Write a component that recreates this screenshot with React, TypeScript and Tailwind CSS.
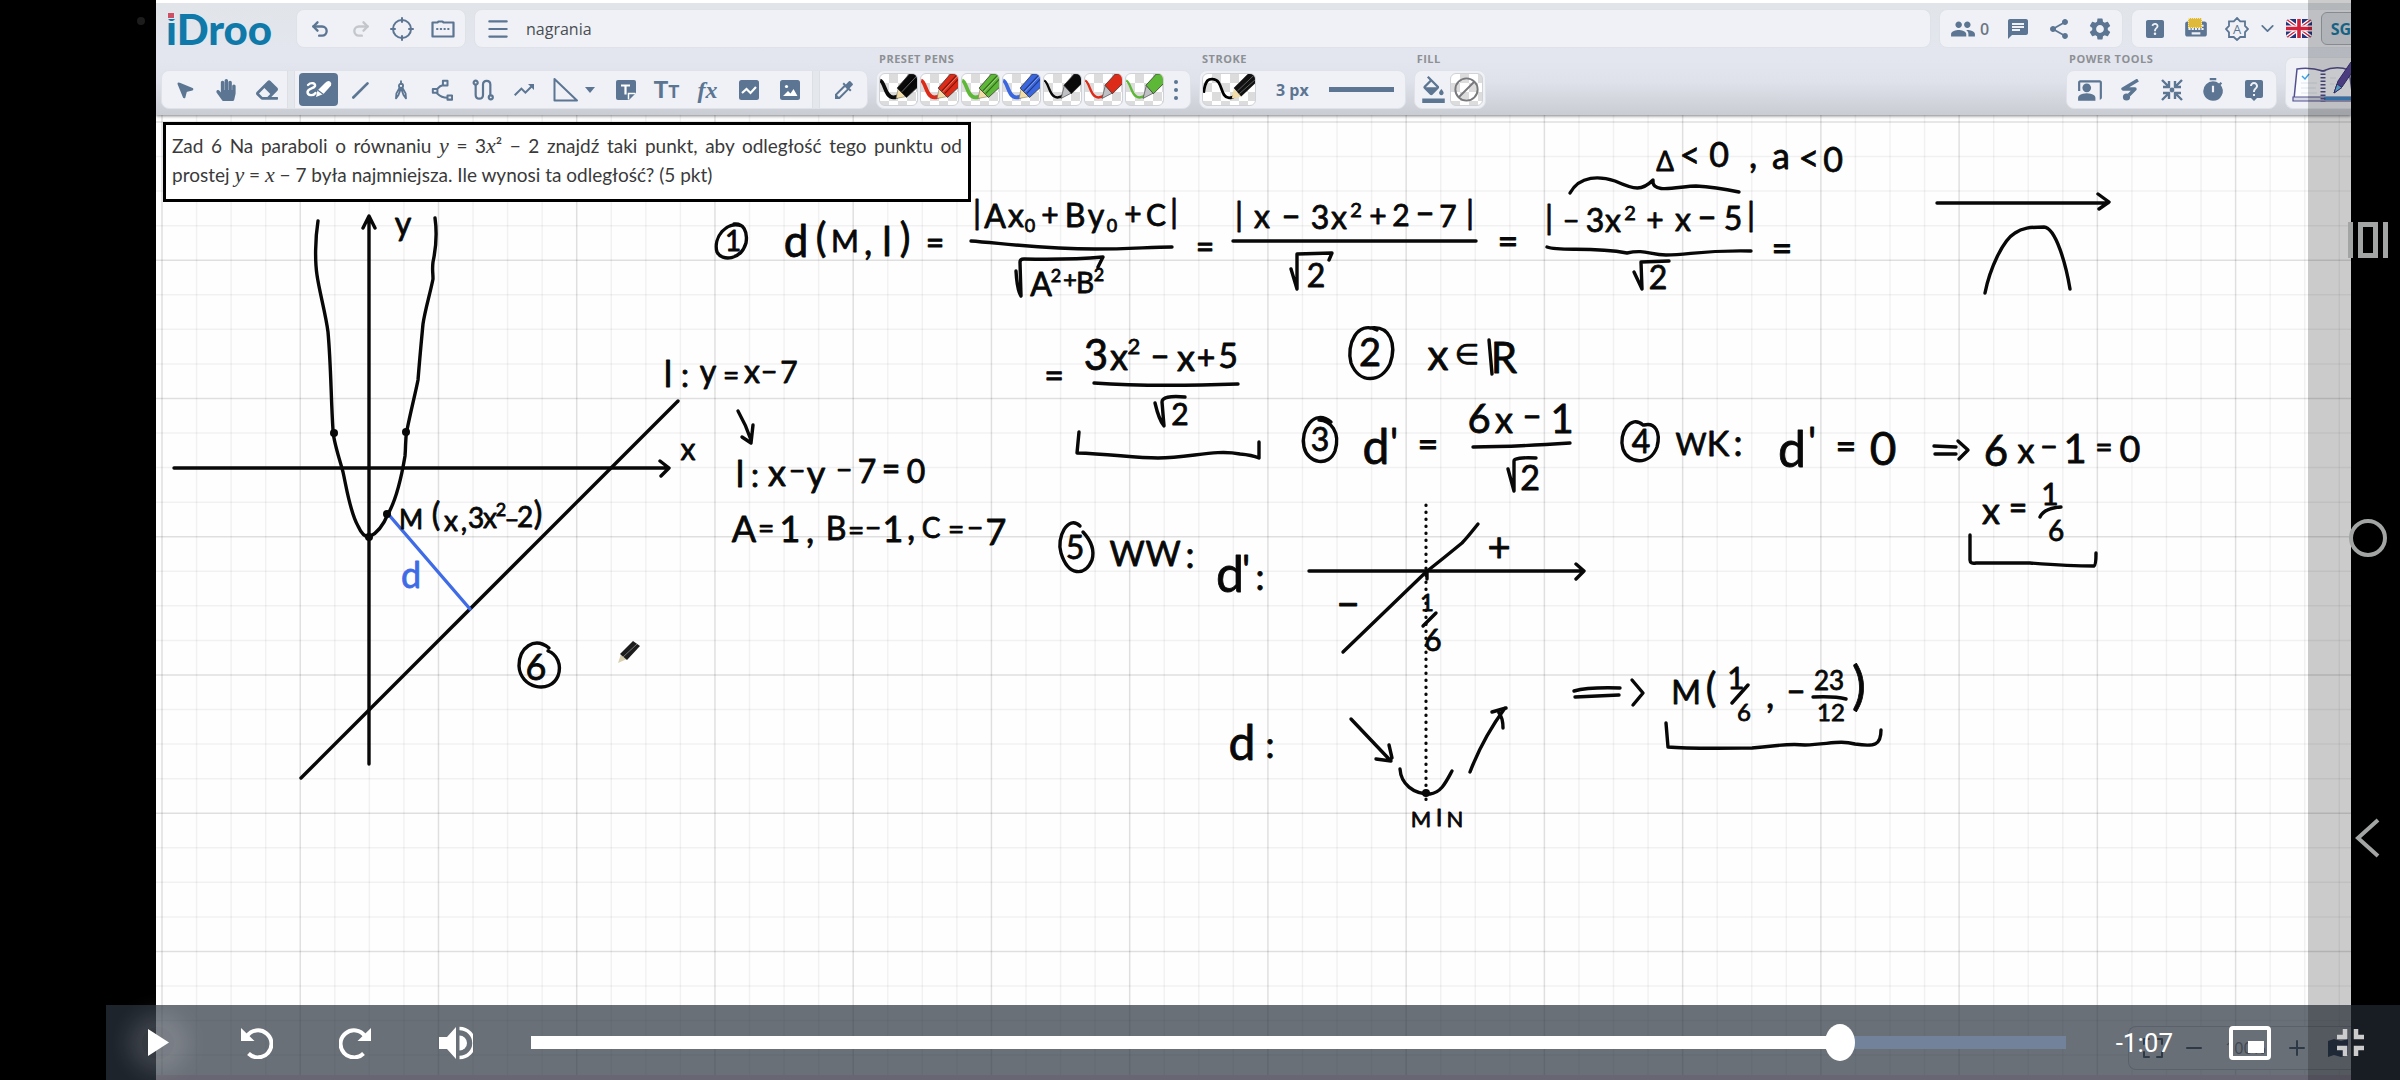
import React from "react";
import { MousePointer2, Undo2, Redo2, Menu, ChevronDown } from "lucide-react";
import {
  MdPeople, MdChat, MdShare, MdSettings, MdHelpCenter, MdKeyboard, MdCoPresent, MdTimer,
  MdLiveHelp, MdFormatColorFill, MdColorize, MdTrendingUp,
} from "react-icons/md";
import { FaEraser, FaHandPaper } from "react-icons/fa";

type Kids = { children: React.ReactNode };

function Tool({ label, children, active }: Kids & { label: string; active?: boolean }) {
  return (
    <button
      type="button"
      aria-label={label}
      className={
        active
          ? "mx-px flex h-[33px] w-[39px] shrink-0 items-center justify-center rounded bg-[#5b7592] text-white"
          : "flex h-[33px] w-[41px] shrink-0 items-center justify-center text-[#5b7592]"
      }
    >
      {children}
    </button>
  );
}

function Group({ children, label }: Kids & { label: string }) {
  return (
    <div
      role="group"
      aria-label={label}
      className="flex h-[39px] items-center rounded-lg border border-[#dfe3e9] bg-[#eff1f6] px-0.5"
    >
      {children}
    </div>
  );
}

function Labelled({ title, children }: Kids & { title: string }) {
  return (
    <section className="flex flex-col gap-1">
      <h2 className="h-[14px] pl-[3px] text-[11px] leading-[14px] font-bold tracking-[0.5px] text-[#8d9094]">{title}</h2>
      <Group label={title}>{children}</Group>
    </section>
  );
}

function Divider() {
  return <span className="h-[37px] w-[8px] shrink-0 border-x border-[#dcdfe4] bg-[#e4e7eb]" />;
}

const stroke = { fill: "none", stroke: "currentColor", strokeWidth: 2, strokeLinecap: "round", strokeLinejoin: "round" } as const;

function TargetIcon() {
  return (
    <svg viewBox="0 0 24 24" className="size-6" {...stroke}>
      <circle cx="12" cy="12" r="9" />
      <path d="M12 1v4M12 19v4M1 12h4M19 12h4" />
    </svg>
  );
}
function PanelIcon() {
  return (
    <svg viewBox="0 0 24 24" className="size-6" {...stroke}>
      <path d="M1.500 5.500v14h21v-14h-10l-1-1h-4l-1 1z" strokeWidth="2.200" />
      <path d="M6 12h12" strokeDasharray="0.500 3.200" />
    </svg>
  );
}
function FreehandIcon() {
  return (
    <svg viewBox="0 0 26 20" className="h-5 w-[26px]">
      <path d="M2 5c3-3 8-2 7 1S2 8 1.500 12c0 4 6 4 8 1" fill="none" stroke="#fff" strokeWidth="2.400" strokeLinecap="round" />
      <path d="M10 17l1.500-6.500L19 3q3-3 5-1.500t1 4L17.500 14z" fill="#fff" />
      <path d="M11.500 10l6 4.500" stroke="#5b7592" strokeWidth="1.200" />
    </svg>
  );
}
function LineIcon() {
  return (
    <svg viewBox="0 0 24 24" className="size-5" {...stroke} strokeWidth={3.2}>
      <path d="M4 21L21 4" />
    </svg>
  );
}
function CompassIcon() {
  return (
    <svg viewBox="0 0 24 24" className="size-5" {...stroke} strokeWidth={2.2}>
      <circle cx="12" cy="7" r="2.500" />
      <path d="M12 1.500v3M10.500 9L6.500 16l-.5 6 3-4 2.500-7M13.500 9l4 7 .5 6-3-4-2.500-7" />
    </svg>
  );
}
function NodesIcon() {
  return (
    <svg viewBox="0 0 24 24" className="size-[22px]" {...stroke} strokeWidth={2.2}>
      <path d="M13 2h5v5h-5zM2 11h5v4H2zM18 18h5v4.500h-5zM13.500 6.500Q10 7 6.500 11M6.500 15.500q5 5 11.500 5" />
    </svg>
  );
}
function SquiggleIcon() {
  return (
    <svg viewBox="0 0 24 24" className="size-[22px]" {...stroke} strokeWidth={2.4}>
      <circle cx="4" cy="4" r="2.200" />
      <circle cx="20.500" cy="20" r="2.200" />
      <path d="M4 6.500v11q0 4 4 4t4-4V6q0-4 4-4t4 4v11.500" />
    </svg>
  );
}
function TriangleIcon() {
  return (
    <svg viewBox="0 0 26 26" className="size-[26px]" {...stroke}>
      <path d="M2.500 2v21.500H25z" />
    </svg>
  );
}
function ChartIcon() {
  return (
    <svg viewBox="0 0 20 20" className="size-5">
      <rect width="20" height="20" rx="2.500" fill="currentColor" />
      <path d="M3 13l4.500-4 4 4L17 7" fill="none" stroke="#fff" strokeWidth="2.200" />
    </svg>
  );
}
function PictureIcon() {
  return (
    <svg viewBox="0 0 20 20" className="size-5">
      <rect width="20" height="20" rx="2.500" fill="currentColor" />
      <circle cx="6.500" cy="6.500" r="1.600" fill="#fff" />
      <path d="M3 16l5-5 2.500 2.500L13.500 9l4 7z" fill="#fff" />
    </svg>
  );
}
function SpotIcon() {
  return (
    <svg viewBox="0 0 22 22" className="size-[22px]">
      <path d="M18 1L3 10h12L9 16" fill="none" stroke="currentColor" strokeWidth="3.400" strokeLinejoin="round" />
      <circle cx="6.500" cy="18" r="3.600" fill="currentColor" />
    </svg>
  );
}
function GatherIcon() {
  return (
    <svg viewBox="0 0 24 24" className="size-6" {...stroke} strokeLinecap="butt" strokeLinejoin="miter" strokeWidth={2.4}>
      <path d="M2 2l6 6M3 9h6V3M22 2l-6 6M21 9h-6V3M2 22l6-6M3 15h6v6M22 22l-6-6M21 15h-6v6" />
      <circle cx="12" cy="12" r="1.200" />
    </svg>
  );
}
function FlagIcon() {
  return (
    <svg viewBox="0 0 26 19" className="h-[19px] w-[26px] rounded">
      <rect width="26" height="19" fill="#25357c" />
      <path d="M0 0l26 19M26 0L0 19" stroke="#fff" strokeWidth="4" />
      <path d="M0 0l26 19M26 0L0 19" stroke="#d3213b" strokeWidth="1.400" />
      <path d="M13 0v19M0 9.500h26" stroke="#fff" strokeWidth="6" />
      <path d="M13 0v19M0 9.500h26" stroke="#d3213b" strokeWidth="3.600" />
    </svg>
  );
}
function NotebookIcon() {
  return (
    <svg viewBox="0 0 66 50" className="h-[50px] w-[66px] shrink-0">
      <path d="M8 41L11 11q13-2 26 2 13-6 26-1l4 29z" fill="#fbfcff" stroke="#54508f" strokeWidth="1.500" />
      <path d="M7 39h60v4H7z" fill="#d7dbe8" stroke="#54508f" strokeWidth="1.200" />
      <path d="M38 39h30v3H38z" fill="#3c8fd0" />
      <path d="M15 25h16M15 30h15M15 35h16M44 20h6M44 26h4" stroke="#dfe3ee" strokeWidth="1.200" />
      <path d="M16 18l3 3 4-5" stroke="#3ba0e6" fill="none" strokeWidth="1.500" />
      <path d="M37 12v32" stroke="#54508f" strokeWidth="5" strokeDasharray="1.500 2" />
      <path d="M48 35l4-12L65 4l4 6-13 19z" fill="#5d4c9e" stroke="#3d3577" />
      <path d="M48 35l3-9 5 3.500z" fill="#67c2ef" stroke="#3d3577" />
    </svg>
  );
}

const checker = "bg-[conic-gradient(#dcdcdc_25%,#fff_0_50%,#dcdcdc_0_75%,#fff_0)] bg-[length:18px_18px]";

function Pen({ name, color, marker }: { name: string; color: string; marker?: boolean }) {
  return (
    <button type="button" aria-label={name} className={`h-[33px] w-[39px] shrink-0 overflow-hidden rounded-md border border-[#cfd2d6] ${checker}`}>
      <svg viewBox="0 0 39 33" className="h-full w-full">
        <path d="M0 7C5 8 5 25 14 25q4 0 7-3" fill="none" stroke={color} strokeWidth={marker ? 2.5 : 4} />
        {marker ? (
          <g>
            <path d="M18 26l3.500-14 8 8z" fill="#bfc1c4" stroke="#555" strokeWidth="0.800" />
            <path d="M21 12L32 0h9v9L29 21z" fill={color} stroke="#333" strokeWidth="0.800" />
          </g>
        ) : (
          <g>
            <path d="M17 26l2-10 9 8z" fill="#f3dca6" stroke="#776" strokeWidth="0.600" />
            <path d="M18 15L31 0h10v13L28 25z" fill={color} stroke="#333" strokeWidth="0.800" />
            <path d="M22 18L38 1M25 21L40 5" stroke="#000" strokeOpacity="0.450" strokeWidth="1.200" />
            <path d="M23 19L39 2" stroke="#fff" strokeOpacity="0.500" strokeWidth="0.800" />
          </g>
        )}
      </svg>
    </button>
  );
}

const pens = [
  { name: "Black pencil", color: "#0a0a0a" },
  { name: "Red pencil", color: "#dc2b18" },
  { name: "Green pencil", color: "#5eb837" },
  { name: "Blue pencil", color: "#3a66e0" },
  { name: "Black marker", color: "#0a0a0a", marker: true },
  { name: "Red marker", color: "#dc2b18", marker: true },
  { name: "Green marker", color: "#5eb837", marker: true },
];

function Header() {
  return (
    <header className="relative z-10 flex flex-col border-t-[3px] border-white bg-[linear-gradient(#e1e5e9,#e3e6ef_50%,#dfe2ea_70%,#c9ccd3)] pt-[6px] pb-[6px] font-['Open_Sans',sans-serif] shadow-[0_1px_3px_rgba(0,0,0,0.5)]">
      <div className="flex items-center pl-[10px]">
        <div className="relative h-[39px] w-[130px] shrink-0">
          <span className="block font-['Lato',sans-serif] text-[42px] leading-[40px] font-black text-[#0f79a9]">iDroo</span>
          <span className="absolute top-[3px] left-[1px] h-[7px] w-[9px] bg-[#e3e6ec]" />
          <span className="absolute top-[4px] left-[2px] h-[5px] w-[6px] bg-[#cf5063]" />
        </div>
        <Group label="History">
          <Tool label="Undo"><Undo2 className="size-5" strokeWidth={2.800} /></Tool>
          <Tool label="Redo"><Redo2 className="size-5 text-[#c3c6cb]" strokeWidth={2.800} /></Tool>
          <Tool label="Center view"><TargetIcon /></Tool>
          <Tool label="Panel"><PanelIcon /></Tool>
        </Group>
        <div className="ml-2 flex h-[39px] flex-1 items-center rounded-lg border border-[#dfe3e9] bg-[#eff1f6] px-0.5">
          <Tool label="Menu"><Menu className="size-[26px]" strokeWidth={2} /></Tool>
          <h1 className="pl-2 text-base text-[#4a4d52]">nagrania</h1>
        </div>
        <div className="ml-2 flex items-center gap-2">
          <Group label="Collaboration">
            <button type="button" className="flex h-[33px] w-[55px] items-center justify-center gap-1 text-base font-semibold text-[#6d7684]">
              <MdPeople className="size-[26px] text-[#5b7592]" />0
            </button>
            <Tool label="Chat"><MdChat className="size-6" /></Tool>
            <Tool label="Share"><MdShare className="size-6" /></Tool>
            <Tool label="Settings"><MdSettings className="size-[26px]" /></Tool>
          </Group>
          <div className="flex h-[39px] w-[220px] items-center overflow-hidden rounded-l-lg border border-r-0 border-[#dfe3e9] bg-[#eff1f6] pl-0.5">
            <Tool label="Help"><MdHelpCenter className="size-6" /></Tool>
            <Tool label="Keyboard">
              <span className="relative">
                <MdKeyboard className="size-[26px]" />
                <span className="absolute top-0.5 left-[5px] h-[10px] w-[14px] border border-dotted border-[#f4e6a8] bg-[#dfb93a]" />
              </span>
            </Tool>
            <Tool label="Theme">
              <svg viewBox="0 0 24 24" className="size-6">
                <path d="M12 1l3.200 3.300H20v4.600L23 12l-3 3.200V20h-4.700L12 23l-3.300-3H4v-4.700L1 12l3-3.100V4.300h4.800z" fill="none" stroke="currentColor" strokeWidth="1.800" />
                <text x="12" y="16.500" textAnchor="middle" fontSize="13" fill="currentColor">A</text>
              </svg>
            </Tool>
            <ChevronDown className="size-[21px] shrink-0 text-[#5b7592]" />
            <button type="button" aria-label="Language" className="ml-2 shrink-0"><FlagIcon /></button>
            <button type="button" className="ml-[9px] h-[33px] w-10 shrink-0 rounded-md border border-[#a9adb3] bg-[#dde1e6] text-base font-bold text-[#1c7ba6]">SG</button>
          </div>
        </div>
      </div>

      <div className="mt-1 flex items-end gap-2 pl-[5px]">
        <Group label="Tools">
          <Tool label="Select"><MousePointer2 className="size-5" fill="currentColor" /></Tool>
          <Tool label="Pan"><FaHandPaper className="size-[22px]" /></Tool>
          <Tool label="Erase"><FaEraser className="size-[22px]" /></Tool>
          <Divider />
          <span className="w-[3px]" />
          <Tool label="Freehand" active><FreehandIcon /></Tool>
          <Tool label="Line"><LineIcon /></Tool>
          <Tool label="Compass"><CompassIcon /></Tool>
          <Tool label="Connector"><NodesIcon /></Tool>
          <Tool label="Curve"><SquiggleIcon /></Tool>
          <Tool label="Trend"><MdTrendingUp className="size-6" /></Tool>
          <Tool label="Shape"><TriangleIcon /></Tool>
          <button type="button" aria-label="More shapes" className="flex h-[33px] w-5 items-center">
            <svg viewBox="0 0 10 6" className="h-1.5 w-[10px] text-[#5b7592]"><path d="M0 0h10L5 6z" fill="currentColor" /></svg>
          </button>
          <Tool label="Note">
            <svg viewBox="0 0 20 20" className="size-5">
              <path d="M2 0h16q2 0 2 2v11l-7 7H2q-2 0-2-2V2q0-2 2-2z" fill="currentColor" />
              <path d="M12.500 19.500v-6h7" fill="none" stroke="#fff" strokeWidth="1.500" />
              <path d="M5 5.500h9M9.500 5.500v9" stroke="#fff" strokeWidth="2.200" />
            </svg>
          </Tool>
          <Tool label="Text"><span className="font-['Roboto',sans-serif] text-2xl font-bold">T<span className="text-lg">T</span></span></Tool>
          <Tool label="Formula"><span className="font-['Liberation_Serif',serif] text-2xl font-bold italic">fx</span></Tool>
          <Tool label="Chart"><ChartIcon /></Tool>
          <Tool label="Image"><PictureIcon /></Tool>
          <span className="w-0.5" />
          <Divider />
          <span className="w-[3px]" />
          <Tool label="Color picker"><MdColorize className="size-6" /></Tool>
          <span className="w-px" />
        </Group>

        <Labelled title="PRESET PENS">
          <div className="flex gap-0.5">
            {pens.map((p) => <Pen key={p.name} {...p} />)}
          </div>
          <button type="button" aria-label="More pens" className="flex h-[33px] w-6 items-center justify-center">
            <svg viewBox="0 0 4 20" className="h-5 w-1 text-[#5b7592]">
              <g fill="currentColor"><circle cx="2" cy="2" r="2" /><circle cx="2" cy="10" r="2" /><circle cx="2" cy="18" r="2" /></g>
            </svg>
          </button>
        </Labelled>

        <Labelled title="STROKE">
          <button type="button" aria-label="Stroke style" className={`h-[33px] w-[54px] overflow-hidden rounded-md border border-[#cfd2d6] ${checker}`}>
            <svg viewBox="0 0 54 33" className="h-full w-full">
              <path d="M0 20C2 5 6 5 10 5.500c11 1 7 19 17 20q4 0 8-4" fill="none" stroke="#000" strokeWidth="3" />
              <path d="M30 26l2-10 8 8z" fill="#f3dca6" />
              <path d="M32 15L47 0h9v9L40 24z" fill="#111" />
              <path d="M36 18L54 1M38 21L55 6" stroke="#777" strokeWidth="0.800" />
            </svg>
          </button>
          <button type="button" className="flex h-[33px] items-center gap-5 pr-[9px] pl-5 text-base font-bold text-[#5b7592]">
            3 px
            <span className="h-[5px] w-[65px] bg-[#5b7592]" />
          </button>
        </Labelled>

        <Labelled title="FILL">
          <button type="button" aria-label="Fill" className="flex h-[33px] w-[33px] items-center justify-center text-[#5b7592]">
            <MdFormatColorFill className="size-[27px]" />
          </button>
          <button type="button" aria-label="No fill" className={`h-[33px] w-[33px] rounded-md border border-[#cfd2d6] ${checker}`}>
            <svg viewBox="0 0 32 32" className="h-full w-full" fill="none" stroke="#77797c" strokeWidth="2">
              <circle cx="16" cy="16" r="11.500" /><path d="M8 24L24 8" />
            </svg>
          </button>
        </Labelled>

        <div className="ml-auto flex items-end gap-2">
          <Labelled title="POWER TOOLS">
            <Tool label="Presenter"><MdCoPresent className="size-[26px]" /></Tool>
            <Tool label="Laser"><SpotIcon /></Tool>
            <Tool label="Gather"><GatherIcon /></Tool>
            <Tool label="Timer"><MdTimer className="size-[26px]" /></Tool>
            <Tool label="Ask"><MdLiveHelp className="size-6" /></Tool>
          </Labelled>
          <div className="h-[52px] w-[66px] overflow-hidden rounded-l-lg border border-r-0 border-[#dfe3e9] bg-[#eff1f6]">
            <NotebookIcon />
          </div>
        </div>
      </div>
    </header>
  );
}

type Glyph = [text: string, x: number, y: number, size: number];

const formulas: Glyph[][] = [
  [["y", 403, 235, 32]],
  [["x", 688, 460, 30]],
  [["M", 411, 529, 26], ["(", 436, 526, 32], ["x", 451, 531, 28], [",", 464, 531, 28], ["3", 476, 528, 28], ["x", 490, 528, 28], ["2", 501, 516, 18], ["−", 512, 528, 24], ["2", 525, 527, 28], [")", 538, 525, 32]],
  [["6", 536, 680, 36]],
  [["l", 668, 387, 36], [":", 685, 387, 32], ["y", 708, 383, 32], ["=", 731, 385, 28], ["x", 752, 383, 32], ["−", 769, 382, 28], ["7", 789, 383, 30]],
  [["l", 740, 487, 36], [":", 755, 487, 32], ["x", 777, 486, 36], ["−", 797, 481, 28], ["y", 816, 487, 36], ["−", 844, 480, 28], ["7", 867, 483, 32], ["=", 891, 480, 32], ["0", 916, 483, 32]],
  [["A", 744, 542, 36], ["=", 766, 538, 28], ["1", 790, 542, 36], [",", 810, 543, 36], ["B", 836, 540, 32], ["=", 856, 540, 28], ["−", 873, 538, 28], ["1", 893, 542, 36], [",", 911, 540, 36], ["C", 931, 538, 28], ["=", 956, 539, 28], ["−", 975, 538, 28], ["7", 996, 545, 36]],
  [["1", 733, 251, 28]],
  [["d", 796, 257, 44], ["(", 821, 252, 40], ["M", 845, 252, 30], [",", 868, 255, 36], ["l", 887, 256, 40], [")", 905, 252, 40], ["=", 935, 254, 32]],
  [["|", 977, 224, 32], ["A", 995, 228, 32], ["x", 1016, 227, 32], ["0", 1030, 232, 18], ["+", 1050, 226, 30], ["B", 1075, 227, 32], ["y", 1096, 227, 32], ["0", 1112, 232, 18], ["+", 1133, 225, 30], ["C", 1156, 226, 30], ["|", 1174, 223, 32]],
  [["A", 1041, 296, 32], ["2", 1056, 282, 18], ["+", 1070, 288, 24], ["B", 1085, 293, 28], ["2", 1099, 281, 18]],
  [["=", 1205, 258, 32]],
  [["|", 1239, 226, 32], ["x", 1262, 228, 32], ["−", 1291, 228, 32], ["3", 1320, 229, 32], ["x", 1339, 229, 32], ["2", 1356, 217, 20], ["+", 1378, 227, 30], ["2", 1401, 226, 30], ["−", 1425, 225, 32], ["7", 1448, 227, 30], ["|", 1470, 224, 32]],
  [["2", 1316, 287, 32]],
  [["=", 1508, 254, 36]],
  [["|", 1549, 229, 32], ["−", 1571, 231, 28], ["3", 1595, 232, 32], ["x", 1613, 232, 32], ["2", 1630, 220, 20], ["+", 1655, 231, 30], ["x", 1683, 231, 32], ["−", 1707, 229, 32], ["5", 1733, 230, 32], ["|", 1751, 226, 32]],
  [["2", 1658, 289, 32]],
  [["=", 1782, 261, 36]],
  [["Δ", 1665, 171, 26], ["<", 1690, 168, 36], ["0", 1719, 167, 34], [",", 1753, 168, 36], ["a", 1781, 169, 36], ["<", 1809, 171, 36], ["0", 1833, 172, 34]],
  [["=", 1054, 388, 34], ["3", 1096, 370, 42], ["x", 1119, 370, 36], ["2", 1134, 354, 22], ["−", 1160, 368, 32], ["x", 1186, 371, 36], ["+", 1206, 369, 32], ["5", 1228, 368, 34]],
  [["2", 1180, 425, 30]],
  [["2", 1370, 366, 38]],
  [["x", 1438, 370, 42], ["∈", 1467, 364, 28], ["R", 1504, 373, 42]],
  [["3", 1320, 451, 32]],
  [["d", 1376, 464, 48], ["'", 1394, 457, 40], ["=", 1428, 457, 36]],
  [["6", 1479, 433, 40], ["x", 1504, 433, 36], ["−", 1532, 428, 32], ["1", 1562, 433, 40]],
  [["2", 1530, 490, 34]],
  [["4", 1641, 453, 32]],
  [["W", 1691, 455, 30], ["K", 1718, 456, 34], [":", 1738, 456, 36]],
  [["d", 1792, 467, 50], ["'", 1812, 456, 40], ["=", 1846, 459, 36], ["0", 1883, 465, 46]],
  [["6", 1996, 466, 42], ["x", 2026, 463, 34], ["−", 2049, 457, 30], ["1", 2075, 463, 40], ["=", 2104, 458, 30], ["0", 2130, 462, 36]],
  [["x", 1991, 524, 36], ["=", 2018, 519, 32]],
  [["1", 2050, 505, 30]],
  [["6", 2056, 541, 28]],
  [["5", 1075, 559, 32]],
  [["W", 1127, 566, 34], ["W", 1163, 566, 34], [":", 1190, 568, 36]],
  [["d", 1230, 592, 50], ["'", 1246, 584, 40], [":", 1260, 590, 36]],
  [["+", 1499, 562, 40]],
  [["−", 1348, 618, 40]],
  [["1", 1427, 611, 24]],
  [["6", 1433, 651, 30]],
  [["d", 1242, 760, 48], [":", 1270, 758, 36]],
  [["M", 1421, 827, 22], ["I", 1439, 826, 24], ["N", 1455, 827, 22]],
  [["M", 1686, 704, 32], ["(", 1711, 702, 40], ["1", 1736, 689, 30], ["6", 1744, 721, 24], [",", 1770, 708, 36], ["−", 1796, 703, 32], ["23", 1829, 690, 26], ["12", 1831, 721, 24], [")", 1859, 704, 52]],
];

const strokes = [
  "M369 764V217M363 228L369 216L375 228",
  "M174 468H668M660 461L669 468L661 476",
  "M301 778L678 401",
  "M318 221C315 240 315 262 317 275C319 290 326 315 328 332C331 365 331 400 333 430C333 440 339 457 343 472C347 490 350 512 358 526C362 535 366 537 369 537C376 534 383 526 388 514C396 500 401 480 405 456C406 445 405 440 407 430C411 410 415 395 418 380C420 355 421 345 423 324C425 310 430 294 433 279C433 272 432 270 433 262C436 248 437 232 435 218",
  "M738 411Q746 425 751 440M742 437L751 443L753 425",
  "M742 226C726 220 713 238 717 252C722 262 741 260 746 243C748 231 743 223 734 224",
  "M971 241C1000 243 1040 249 1095 249C1130 249 1150 247 1172 247",
  "M1016 271Q1017 290 1021 296L1020 262Q1020 259 1024 259Q1070 260 1103 257L1098 267",
  "M1233 241H1476",
  "M1291 269L1297 289V254L1332 253L1329 260",
  "M1547 247C1560 252 1590 246 1627 253C1645 249 1650 255 1666 255C1690 255 1700 250 1751 251",
  "M1570 193C1580 175 1600 176 1615 181C1635 190 1642 191 1653 180C1651 195 1680 186 1696 186Q1715 187 1739 192",
  "M1634 272L1642 289L1641 262L1669 261",
  "M1937 203H2108M2098 194L2109 202L2099 209",
  "M1985 293C1990 268 2003 240 2015 233C2022 228 2030 227 2044 227C2056 228 2066 265 2070 289",
  "M1094 383Q1150 387 1238 384",
  "M1155 403Q1159 420 1164 426L1162 402Q1162 395 1185 397",
  "M1079 432L1077 453C1110 454 1135 458 1158 458C1190 458 1215 449 1240 454Q1252 455 1259 458V442",
  "M1377 330C1357 320 1346 345 1351 363C1359 384 1381 383 1390 364C1397 344 1390 325 1370 328",
  "M1489 340L1492 374",
  "M1331 422C1314 408 1300 430 1304 447C1308 464 1329 467 1335 451C1341 432 1330 420 1319 420",
  "M1473 447Q1510 447 1570 443",
  "M1508 469L1514 491V461Q1514 457 1536 458",
  "M1643 425C1631 414 1618 433 1623 449C1628 464 1650 466 1657 447C1661 432 1655 422 1644 425",
  "M1934 446L1956 447M1935 454L1956 454M1958 441L1968 450L1959 459",
  "M2040 517Q2044 508 2061 507",
  "M1970 535V560Q1970 564 1976 563L2030 563Q2070 566 2094 566Q2096 565 2096 553",
  "M1080 526C1068 514 1056 538 1061 553C1068 576 1085 577 1092 560Q1096 546 1083 532",
  "M1309 571H1584M1576 564L1584 571L1576 579",
  "M1343 652L1426 572Q1445 557 1462 543Q1466 539 1478 524",
  "M1427 571V579M1423 626L1436 613",
  "M1351 719L1389 759M1376 759L1391 761M1389 745L1392 758",
  "M1400 769C1401 784 1413 794 1430 794C1441 793 1446 782 1452 771",
  "M1470 772Q1483 738 1505 708M1492 712L1506 708M1499 713Q1503 718 1503 728",
  "M1574 691Q1588 687 1620 688M1575 697L1619 695M1632 680L1643 693L1633 705",
  "M1732 703L1748 685M1813 697Q1835 696 1846 699",
  "M1666 723L1668 747C1690 749 1740 748 1752 748C1780 746 1785 743 1805 745C1830 744 1840 740 1855 744C1875 747 1881 745 1881 730",
  "M549 648C534 636 519 648 519 666C520 688 550 695 558 676C562 665 557 654 548 651",
];

const dots = [[334, 433], [406, 432], [387, 514], [369, 537], [1426, 793]];

function GridLines() {
  const step = 138.24 / 4;
  return (
    <g>
      {Array.from({ length: 64 }, (_, i) => (
        <path key={"v" + i} d={`M${162 + i * step} 115V1080`} stroke="#000" strokeOpacity={i % 4 ? 0.05 : 0.12} strokeWidth="1.500" />
      ))}
      {Array.from({ length: 28 }, (_, i) => (
        <path key={"h" + i} d={`M156 ${122 + i * step}H2351`} stroke="#000" strokeOpacity={i % 4 ? 0.05 : 0.12} strokeWidth="1.500" />
      ))}
    </g>
  );
}

function Board() {
  const math = "font-['Liberation_Serif',serif] text-[22px] leading-none italic";
  return (
    <main className="relative flex-1 overflow-hidden bg-[#fefefe]">
      <svg viewBox="156 115 2195 965" width="2195" height="965" className="absolute top-0 left-0 max-w-none">
        <GridLines />
        <g fill="none" stroke="#080808" strokeWidth="3.400" strokeLinecap="round" strokeLinejoin="round">
          {strokes.map((d) => <path key={d} d={d} />)}
          <path d="M1426 505V802" strokeDasharray="0.500 6.500" strokeWidth="3.200" />
          <path d="M389 515L470 609" stroke="#3f6be6" />
        </g>
        {dots.map(([x, y]) => <circle key={x} cx={x} cy={y} r="4" fill="#080808" />)}
        <g className="font-['Lato','DejaVu_Sans',sans-serif]" fill="#080808" stroke="#080808" strokeWidth="0.800" strokeLinejoin="round" textAnchor="middle">
          {formulas.map((row, i) => (
            <text key={i}>
              {row.map(([t, x, y, size], k) => (
                <tspan key={k} x={x} y={y} fontSize={size}>{t}</tspan>
              ))}
            </text>
          ))}
          <text x="411" y="588" fontSize="36" fill="#3f6be6" stroke="#3f6be6">d</text>
        </g>
        <g>
          <path d="M618 663l3-9 6 5z" fill="#d9cfae" />
          <path d="M620 654l13-13 7 5-13 14z" fill="#1c1c1c" />
          <path d="M623 657l14-13" stroke="#8b8b8b" strokeWidth="0.800" />
        </g>
      </svg>

      <article className="relative mt-[7px] ml-[7px] w-[808px] border-[3px] border-black bg-white px-[6px] pt-[6px] pb-[10px] font-['Lato',sans-serif] text-[19px] leading-[29px] text-[#3a3a3a]">
        <p className="whitespace-nowrap [text-align-last:justify]">
          Zad 6 Na paraboli o równaniu <span className={math}>y</span> = 3<span className={math}>x</span>² − 2 znajdź taki punkt, aby odległość tego punktu od
        </p>
        <p className="whitespace-nowrap">
          prostej <span className={math}>y</span> = <span className={math}>x</span> − 7 była najmniejsza. Ile wynosi ta odległość? (5 pkt)
        </p>
      </article>

      <div className="absolute right-0 bottom-[10px] flex h-[44px] w-[223px] items-center justify-between rounded-l-lg border border-r-0 border-[#c9ccd1] bg-[#fafafa] pr-[3px] pl-[14px] font-['Open_Sans',sans-serif] text-base text-[#33475c]">
        <svg viewBox="0 0 20 20" className="size-5" {...stroke}><path d="M1 6V1h5M14 1h5v5M19 14v5h-5M6 19H1v-5" /></svg>
        <svg viewBox="0 0 16 16" className="size-4" {...stroke}><path d="M1 8h14" /></svg>
        <span className="text-[#777]">100%</span>
        <svg viewBox="0 0 16 16" className="size-4" {...stroke}><path d="M1 8h14M8 1v14" /></svg>
        <svg viewBox="0 0 20 20" className="size-5"><path d="M0 3l6-2 7 2 7-2v16l-7 2-7-2-6 2z" fill="#1f3550" /></svg>
      </div>
      <div className="absolute inset-x-0 bottom-0 h-[5px] bg-[#f3ddea]" />
    </main>
  );
}

function Player() {
  return (
    <div className="absolute right-0 bottom-0 left-[106px] flex h-[75px] items-center bg-[#2b333f]/70 pr-[36px] pl-[36px] text-white">
      <button type="button" aria-label="Play" className="flex h-8 w-8 items-center justify-center rounded-full bg-white/10 shadow-[0_0_22px_14px_rgba(255,255,255,0.14)]">
        <svg viewBox="0 0 21 27" className="h-[27px] w-[21px]"><path d="M0 0l21 13.500L0 27z" fill="#fff" /></svg>
      </button>
      <button type="button" aria-label="Rewind" className="ml-[67px]">
        <svg viewBox="0 0 32 32" className="size-8">
          <path d="M6 9A13.500 13.500 0 1 1 7.500 26.500" fill="none" stroke="#fff" strokeWidth="4" />
          <path d="M0 1l13.500 13H0z" fill="#fff" />
        </svg>
      </button>
      <button type="button" aria-label="Forward" className="ml-[66px]">
        <svg viewBox="0 0 32 32" className="size-8">
          <path d="M26 9A13.500 13.500 0 1 0 24.500 26.500" fill="none" stroke="#fff" strokeWidth="4" />
          <path d="M32 1L18.500 14H32z" fill="#fff" />
        </svg>
      </button>
      <button type="button" aria-label="Mute" className="ml-[68px]">
        <svg viewBox="0 0 34 34" className="size-[34px]" fill="#fff">
          <path d="M0 11h8l9-10v32l-9-10H0z" />
          <path d="M20.500 9.500a7.500 7.500 0 0 1 0 15z" />
          <path d="M20.500 2.500a14.500 14.500 0 0 1 0 29" fill="none" stroke="#fff" strokeWidth="3.500" />
        </svg>
      </button>
      <input
        type="range"
        aria-label="Progress"
        defaultValue={86}
        className="mr-[50px] ml-[58px] h-[13px] min-w-0 flex-1 appearance-none bg-[linear-gradient(90deg,#fff_85%,#71829a_85%)] [&::-webkit-slider-thumb]:h-[37px] [&::-webkit-slider-thumb]:w-[30px] [&::-webkit-slider-thumb]:appearance-none [&::-webkit-slider-thumb]:rounded-[50%] [&::-webkit-slider-thumb]:bg-white"
      />
      <time className="font-['Roboto',sans-serif] text-[26px] leading-8">-1:07</time>
      <button type="button" aria-label="Picture in picture" className="ml-[56px]">
        <svg viewBox="0 0 42 34" className="h-[34px] w-[42px]">
          <rect x="2" y="2" width="38" height="30" rx="2" fill="none" stroke="#fff" strokeWidth="4" />
          <rect x="19" y="15" width="16" height="12" fill="#fff" />
        </svg>
      </button>
      <button type="button" aria-label="Exit fullscreen" className="ml-[66px]">
        <svg viewBox="0 0 27 27" className="size-[27px]" fill="none" stroke="#fff" strokeWidth="4.500">
          <path d="M8 0v8H0M19 0v8h8M8 27v-8H0M19 27v-8h8" />
        </svg>
      </button>
    </div>
  );
}

function SystemNav() {
  return (
    <nav aria-label="System" className="absolute inset-y-0 right-0 z-20 flex w-[92px] flex-col items-end justify-between bg-black/20 pt-[222px] pr-[12px] pb-[222px] text-[#a3a4a4]">
      <button type="button" aria-label="Recents">
        <svg viewBox="0 0 40 36" className="h-9 w-10" fill="none" stroke="currentColor">
          <path d="M2.500 0v36M37.500 0v36" strokeWidth="5" />
          <path d="M12.500 2.500h15v31h-15z" strokeWidth="5" />
        </svg>
      </button>
      <button type="button" aria-label="Home">
        <svg viewBox="0 0 40 40" className="size-10" fill="none" stroke="currentColor" strokeWidth="4">
          <circle cx="20" cy="20" r="17" />
        </svg>
      </button>
      <button type="button" aria-label="Back" className="pr-2">
        <svg viewBox="0 0 25 40" className="h-10 w-[25px]" fill="none" stroke="currentColor" strokeWidth="4">
          <path d="M23 2L3 20L23 38" />
        </svg>
      </button>
    </nav>
  );
}

export default function App() {
  return (
    <div className="relative flex h-screen overflow-hidden bg-black">
      <div className="flex w-[156px] shrink-0 justify-end pt-[17px] pr-[11px]">
        <span className="size-2 rounded-full bg-[#1c1c1c]" />
      </div>
      <div className="flex min-w-0 flex-1 flex-col">
        <Header />
        <Board />
      </div>
      <div className="w-[49px] shrink-0" />
      <Player />
      <SystemNav />
    </div>
  );
}
